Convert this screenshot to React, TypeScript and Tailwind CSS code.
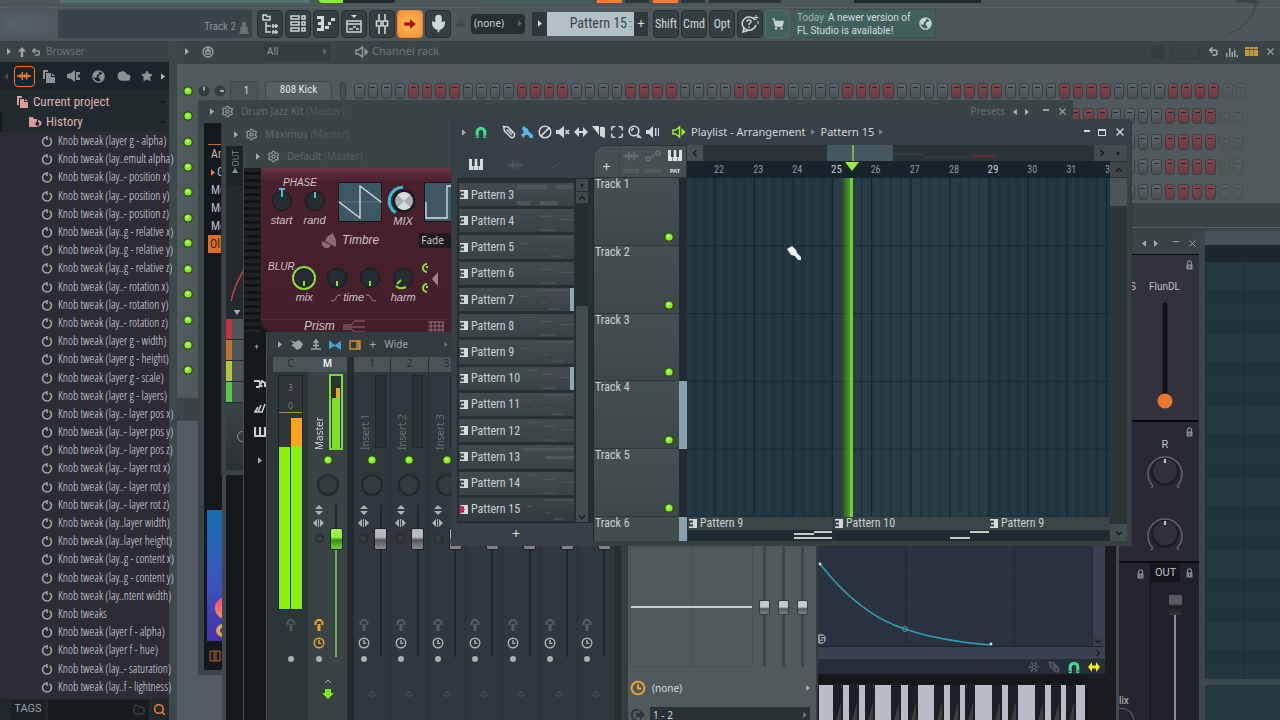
import React from 'react';
import clsx from 'clsx';
import { twMerge } from 'tailwind-merge';
import {
  Ban, Cloud, Magnet, Maximize, Mic, Search,
  Settings, ShoppingCart, Star, Undo2, X, Folder, Snowflake
} from 'lucide-react';

const HISTORY = [
  'Knob tweak (layer g - alpha)', 'Knob tweak (lay..emult alpha)', 'Knob tweak (lay..- position x)',
  'Knob tweak (lay..- position y)', 'Knob tweak (lay..- position z)', 'Knob tweak (lay..g - relative x)',
  'Knob tweak (lay..g - relative y)', 'Knob tweak (lay..g - relative z)', 'Knob tweak (lay..- rotation x)',
  'Knob tweak (lay..- rotation y)', 'Knob tweak (lay..- rotation z)', 'Knob tweak (layer g - width)',
  'Knob tweak (layer g - height)', 'Knob tweak (layer g - scale)', 'Knob tweak (layer g - layers)',
  'Knob tweak (lay..- layer pos x)', 'Knob tweak (lay..- layer pos y)', 'Knob tweak (lay..- layer pos z)',
  'Knob tweak (lay..- layer rot x)', 'Knob tweak (lay..- layer rot y)', 'Knob tweak (lay..- layer rot z)',
  'Knob tweak (lay..layer width)', 'Knob tweak (lay..layer height)', 'Knob tweak (lay..g - content x)',
  'Knob tweak (lay..g - content y)', 'Knob tweak (lay..ntent width)', 'Knob tweaks',
  'Knob tweak (layer f - alpha)', 'Knob tweak (layer f - hue)', 'Knob tweak (lay..- saturation)',
  'Knob tweak (lay..f - lightness)',
];

const PATTERNS = [3, 4, 5, 6, 7, 8, 9, 10, 11, 12, 13, 14, 15];
const TRACKS = [1, 2, 3, 4, 5];
const INSERTS = ['1', '2', '3', '', '', '', ''];
const BLACK_KEYS = [833, 849, 865, 891, 908, 934, 950, 965, 992, 1008, 1035, 1051, 1066];
const BARS = Array.from({ length: 11 }, (_, i) => 28 + i * 39.15);

// ---------- shared bits ----------

const Tri = ({ left = false, className = '' }: { left?: boolean; className?: string }) => (
  <svg viewBox="0 0 5 8" className={twMerge('h-[7px] w-[4px] shrink-0 fill-[#a4afb1]', className)}>
    <path d={left ? 'M5 0V8L0 4z' : 'M0 0V8L5 4z'} />
  </svg>
);

const Led = () => (
  <svg viewBox="0 0 10 10" className="size-[10px] shrink-0">
    <circle cx="5" cy="5" r="4.8" fill="#2b4a1d" />
    <circle cx="5" cy="5" r="3.6" fill="#86ec24" />
    <circle cx="4.5" cy="4.2" r="1.4" fill="#c9ff7d" />
  </svg>
);

const Chevron = ({ d }: { d: string }) => (
  <svg viewBox="0 0 10 10" className="size-[10px] fill-none stroke-[#171e21]" strokeWidth="1.4"><path d={d} /></svg>
);

const UP = 'M2 6.5L5 3.5L8 6.5';
const DOWN = 'M2 3.5L5 6.5L8 3.5';
const LEFT = 'M6.5 2L3.5 5L6.5 8';
const RIGHT = 'M3.5 2L6.5 5L3.5 8';

const PianoIcon = ({ className = '' }: { className?: string }) => (
  <svg viewBox="0 0 14 11" className={twMerge('h-[11px] w-[14px]', className)}>
    <path fill="currentColor" d="M0 0H3V7H4V0H4.200V7H5.400V0H8.600V7H9.800V0H11V0H14V11H0z" />
    <path fill="#373f47" d="M3 0H5.500V7H3zM8.500 0H11V7H8.500zM4 7H4.500V11H4zM9.500 7H10V11H9.500z" />
  </svg>
);

const WaveIcon = ({ className = '' }: { className?: string }) => (
  <svg viewBox="0 0 16 12" className={twMerge('h-[12px] w-[16px]', className)}>
    <path fill="none" stroke="currentColor" strokeWidth="1.6" d="M0 6H16M3.5 4V8M6 1.5V10.5M8.5 4V8M11 2V10M13 4.5V7.5" />
  </svg>
);

const LinkIcon = () => (
  <svg viewBox="0 0 16 12" className="h-[12px] w-[16px] fill-none stroke-current" strokeWidth="1.3">
    <circle cx="3" cy="9" r="2" /><circle cx="13" cy="3" r="2" /><path d="M5 8L7 7L9 5L11 4" />
  </svg>
);

const SpeakerBox = ({ className = '' }: { className?: string }) => (
  <svg viewBox="0 0 14 12" className={clsx('h-[12px] w-[14px]', className)}>
    <path d="M1 4H3.5L7.5 1V11L3.5 8H1z" fill="none" stroke="currentColor" strokeWidth="1.5" />
    <path d="M9.5 2L13.5 6L9.5 10z" fill="currentColor" />
  </svg>
);

const PencilIcon = ({ className = '' }: { className?: string }) => (
  <svg viewBox="0 0 14 14" className={twMerge('size-[14px] fill-none stroke-current', className)} strokeWidth="1.500">
    <path d="M1.500 1.500L6 2L12.500 8.500Q13 11 11 12.500Q10 13 9 12.500L2.500 6zM4.500 4.500L10 10M6.500 3.500L11 8" />
  </svg>
);

const GlobeIcon = ({ className = '' }: { className?: string }) => (
  <svg viewBox="0 0 14 14" className={clsx('size-[13px] shrink-0 fill-none stroke-current', className)}>
    <circle cx="7" cy="7" r="6" strokeWidth="1.500" />
    <path className="fill-current stroke-none" d="M1.500 5L4 2L7 1.500L8 3.500L6.500 5L5 5.500L5.500 7L4 8.500L2 7.500zM9 5L11.500 4L13 7L11.500 10.500L9.500 12L8.500 9.500L7 8.500L7.500 6z" />
  </svg>
);

const ClipIcon = ({ rec = false }: { rec?: boolean }) => (
  <svg viewBox="0 0 8 9" className="h-[9px] w-[8px] shrink-0">
    <path fill="#d3dbdc" d="M0 0H8V9H0V7.5H4V5.2H1V3.8H4V1.5H0z" />
    {rec && <path fill="#e8174c" d="M0 0L5 4.5L0 9z" />}
  </svg>
);

const MagnetIcon = ({ className = '' }: { className?: string }) => (
  <svg viewBox="0 0 12 12" className={clsx('size-[12px]', className)}>
    <path d="M2.2 12V6A3.8 3.8 0 0 1 9.8 6V12" fill="none" stroke="currentColor" strokeWidth="3" />
    <path d="M1.8 9.5V11M10.2 9.5V11" stroke="#25383a" strokeWidth="1.2" />
  </svg>
);

const ClockIcon = ({ className = '' }: { className?: string }) => (
  <svg viewBox="0 0 12 12" className={clsx('shrink-0 fill-none stroke-current', className)} strokeWidth="1.4">
    <circle cx="6" cy="6" r="4.8" /><path d="M6 3V6.4H8.4" />
  </svg>
);

const PlugIcon = () => (
  <svg viewBox="0 0 10 14" className="h-[14px] w-[10px] shrink-0 fill-none stroke-current" strokeWidth="2">
    <path d="M1.5 7V4.5L3.5 2H6.5L8.5 4.5V7" /><path d="M5 6V13" strokeWidth="3" />
  </svg>
);

const Gear = () => <Settings size={13} strokeWidth={2.5} className="shrink-0 text-[#8a9698]" />;

const PluginTitle = ({ name, owner }: { name: string; owner: string }) => (
  <div className="flex h-[23px] shrink-0 items-center gap-[7px] pl-[12px] text-[10px] text-[#5d686a]">
    <Tri />
    <Gear />
    <span>{name} <span className="text-[#505b5d]">{owner}</span></span>
  </div>
);

const DarkKnob = ({ label, children }: { label?: string; children?: React.ReactNode }) => (
  <div className="flex w-[33px] flex-col items-center">
    <svg viewBox="0 0 26 26" className="size-[26px] overflow-visible">
      <circle cx="13" cy="13" r="9.5" fill="#252c32" stroke="#1b2126" strokeWidth="1.5" />
      {children}
    </svg>
    {label && <span>{label}</span>}
  </div>
);

// ---------- top toolbar ----------

const ToolButton = ({ label, active = false, children }: { label: string; active?: boolean; children: React.ReactNode }) => (
  <button
    aria-label={label}
    className={clsx(
      'flex h-[28px] w-[26px] shrink-0 items-center justify-center rounded-sm border font-[Roboto_Condensed,Roboto,sans-serif] text-[12px]',
      active ? 'border-[#e08030] bg-[radial-gradient(#ffc05c,#ff8a34)] text-[#b01500]' : 'border-[#262f32] bg-[#353e41] text-[#cfd8d9]'
    )}
  >
    {children}
  </button>
);

const TopBar = () => (
  <header className="flex h-[41px] shrink-0 flex-col overflow-hidden bg-[#4d575a]">
    <div className="flex h-[8px] shrink-0 items-start border-b border-[#586265]">
      <div className="ml-[60px] h-[3px] w-[250px] bg-[#55736d]" />
      <div className="ml-[9px] h-[3px] w-[24px] rounded-bl bg-[#8cf028]" />
      <div className="h-[3px] w-[52px] rounded-br bg-[#1e2829]" />
      <div className="ml-[85px] h-[3px] w-[112px] bg-[#456058]" />
      <div className="ml-[5px] h-[3px] w-[25px] bg-[#ff7a2c]" />
      <div className="ml-[3px] h-[3px] w-[24px] bg-[#2d3639]" />
      <div className="ml-[4px] h-[3px] w-[25px] bg-[#ff7a2c]" />
      <div className="ml-[3px] h-[3px] w-[24px] bg-[#2d3639]" />
      <div className="ml-[4px] h-[3px] w-[72px] bg-[#2d3639]" />
      <div className="ml-[73px] h-[3px] w-[127px] bg-[#20282b]" />
      <svg viewBox="0 0 40 36" className="mr-[18px] ml-auto h-[36px] w-[40px] shrink-0 fill-none stroke-[#3c4649]">
        <path d="M14 1Q24 -1 37 3" strokeWidth="4" /><path d="M34 4Q28 28 4 35" strokeWidth="1" />
      </svg>
    </div>
    <div className="flex items-center gap-[2px] pt-px">
      <div className="h-[28px] w-[56px] bg-[radial-gradient(ellipse_at_20%_50%,#56626d,#4d575a)] blur-[3px]" />
      <div className="mr-[3px] flex h-[28px] w-[194px] items-end justify-end gap-[3px] bg-[#3a4347] pr-[3px] pb-[1px] font-[Roboto_Condensed,Roboto,sans-serif] text-[11px] text-[#8a9496]">
        <span className="pb-px">Track 2</span>
        <svg viewBox="0 0 10 14" className="mb-[2px] h-[13px] w-[10px] fill-[#697476]"><path d="M3 0H7V5H9V10H10V13H0V10H1V5H3z" /></svg>
      </div>
      <ToolButton label="Browser">
        <svg viewBox="0 0 18 20" className="h-[20px] w-[18px] fill-none stroke-current" strokeWidth="1.5">
          <path d="M2 6V1H5L6 2.500H9V6zM5 8V18H10M5 12H10M12 10V14M12 12H17M15 10V14M12 16V20M12 18H17M15 16V20" />
        </svg>
      </ToolButton>
      <ToolButton label="Channel rack">
        <svg viewBox="0 0 16 18" className="h-[18px] w-[16px] fill-none stroke-current" strokeWidth="1.5">
          <path d="M1 1H9V4H1zM1 7H9V10H1zM1 13H9V16H1zM12 1H15V4H12zM12 7H15V10H12zM12 13H15V16H12z" />
        </svg>
      </ToolButton>
      <ToolButton label="Piano roll">
        <svg viewBox="0 0 18 16" className="h-[16px] w-[18px] fill-current">
          <path d="M0 0H7V15H0V12H4V9H1V6H4V3H0zM8 10H12V13H8zM11 6H14V9H11zM14 2H18V5H14z" />
        </svg>
      </ToolButton>
      <ToolButton label="Playlist">
        <svg viewBox="0 0 18 20" className="h-[20px] w-[18px] fill-none stroke-current" strokeWidth="1.5">
          <path d="M6 1H12L9 4z" className="fill-current stroke-none" />
          <path d="M2 7H16V18H2zM2 10H16M4 15H8M8 13H11M11 15H14" />
        </svg>
      </ToolButton>
      <ToolButton label="Mixer">
        <svg viewBox="0 0 14 20" className="h-[20px] w-[14px] fill-none stroke-current" strokeWidth="1.6">
          <path d="M4 0V6M4 13V20M10 0V6M10 13V20M1.500 7H6V12H1.500zM8 7H12.500V12H8z" />
        </svg>
      </ToolButton>
      <ToolButton label="Follow" active>
        <svg viewBox="0 0 14 12" className="h-[10px] w-[12px] fill-current"><path d="M0 4H7V0L14 6L7 12V8H0z" /></svg>
      </ToolButton>
      <ToolButton label="Record"><Mic size={19} strokeWidth={2.2} className="fill-[#cfd8d9]" /></ToolButton>
      <Magnet size={10} className="mx-[3px] shrink-0 -rotate-45 text-[#3c4548]" />
      <button className="flex h-[20px] w-[54px] shrink-0 items-center justify-between rounded-sm bg-[#262e31] px-[3px] text-[10px] text-[#ccd4d5]">
        (none)<Tri className="fill-[#58646a]" />
      </button>
      <div className="ml-[5px] flex h-[24px] shrink-0">
        <button aria-label="Pattern menu" className="flex w-[15px] items-center justify-center bg-[#30393c]"><Tri className="fill-[#d3dbdc]" /></button>
        <div className="flex w-[87px] items-center justify-end gap-[2px] bg-[#b2c1c6] pr-[2px] font-[Roboto_Condensed,Roboto,sans-serif] text-[14px] text-[#39454b]">
          <span className="whitespace-nowrap">Pattern 15</span>
          <svg viewBox="0 0 3 8" className="h-[8px] w-[3px] fill-[#7d8c92]"><path d="M0 1H3V2H0zM0 6H3V7H0z" /></svg>
        </div>
        <button className="w-[14px] bg-[#30393c] text-[14px] leading-[24px] text-[#d3dbdc]">+</button>
      </div>
      <div className="ml-[3px] flex gap-[2px]">
        <ToolButton label="Shift">Shift</ToolButton>
        <ToolButton label="Cmd">Cmd</ToolButton>
        <ToolButton label="Opt">Opt</ToolButton>
        <ToolButton label="Help">
          <svg viewBox="0 0 20 20" className="size-[20px] fill-none stroke-current" strokeWidth="1.5">
            <path d="M15 6A7 6.500 0 1 0 16 11M4 14L3 18L8 16.500" /><path d="M7 8Q7 6 9 6Q11.500 6 11 8Q9 9.500 9 11M9 12.500V14" />
            <path d="M16 1V6M13.500 3.500H18.500M18 7V10" strokeWidth="1" />
          </svg>
        </ToolButton>
        <button aria-label="Shop" className="flex h-[28px] w-[25px] items-center justify-center rounded-sm border border-[#4d6f69] bg-[#41615c] text-[#c6d4d2]">
          <ShoppingCart size={12} strokeWidth={3} className="fill-[#c6d4d2]" />
        </button>
      </div>
      <div className="ml-[2px] flex h-[29px] w-[142px] shrink-0 items-center justify-between border border-[#3d504e] bg-[#41605b] pr-[3px] pl-[2px] text-[10px] leading-[13px] text-[#cedddb]">
        <p className="font-[Roboto,sans-serif] whitespace-nowrap"><span className="mr-[4px] text-[#9fb2af]">Today</span>A newer version of<br />FL Studio is available!</p>
        <GlobeIcon className="text-[#c6d4d2]" />
      </div>
    </div>
  </header>
);

// ---------- browser ----------

const Browser = () => (
  <aside className="flex w-[177px] shrink-0 flex-col border-r-[8px] border-[#3d484a] bg-[#2c2c34]">
    <div className="flex h-[21px] shrink-0 items-center gap-[5px] bg-[#3a4446] pl-[7px] text-[10px] text-[#69757a]">
      <Tri className="mr-[2px]" />
      <svg viewBox="0 0 8 10" className="h-[10px] w-[8px] fill-[#9aa5a8]"><path d="M4 0L8 4.500H5.200V10H2.800V4.500H0z" /></svg>
      <Undo2 size={10} strokeWidth={3.500} className="text-[#8c979a]" />
      Browser
    </div>
    <nav className="flex h-[28px] shrink-0 items-center justify-between bg-[#1c2329] pr-[4px] pl-[4px] text-[#8b9296]">
      <Tri left className="fill-[#454e52]" />
      <button aria-label="Project" className="flex size-[21px] items-center justify-center rounded-[4px] border border-[#e07f34] text-[#f08030]">
        <WaveIcon className="w-[14px]" />
      </button>
      <svg viewBox="0 0 12 13" className="mx-[3px] h-[13px] w-[12px] fill-current"><path d="M0 0H5V2H2V9H0z" /><path d="M3 3H8V7H12V13H3zM9 3L12 6H9z" /></svg>
      <svg viewBox="0 0 14 12" className="mx-[3px] h-[12px] w-[14px] fill-current"><path d="M0 4L4 3L8 0V12L4 9L0 8zM9 2H13V4.500H11V7.500H13V10H9z" /></svg>
      <GlobeIcon className="mx-[3px]" />
      <Cloud size={14} className="mx-[3px] fill-current" />
      <Star size={12} className="mx-[2px] fill-current" />
      <Tri className="fill-[#b3babd]" />
    </nav>
    <div className="flex h-[42px] shrink-0 flex-col bg-[#222a2e] pt-[2px] font-[Roboto_Condensed,Roboto,sans-serif] text-[13px] text-[#dcb5b2]">
      <div className="flex h-[20px] items-center gap-[5px] pr-[4px] pl-[17px]">
        <svg viewBox="0 0 11 12" className="h-[12px] w-[11px] fill-[#d99c96]"><path d="M0 0H5V2H2V9H0zM3 3H7V6H11V12H3zM8 3L11 5H8z" /></svg>
        <span>Current project</span>
        <span className="ml-auto h-[2px] w-[4px] bg-[#11171a]" />
      </div>
      <div className="flex h-[20px] items-center gap-[4px] border-l-2 border-[#141a1d] pr-[4px] pl-[27px]">
        <svg viewBox="0 0 13 12" className="h-[12px] w-[13px] fill-[#d99c96]"><path d="M0 1H4L5 3H8V5L6 8L9 11H0zM9 4Q14 5 12 9L9 11L10 8Q11 7 9 6z" /></svg>
        <span>History</span>
        <span className="ml-auto h-[2px] w-[4px] bg-[#11171a]" />
      </div>
    </div>
    <ul className="flex min-h-0 flex-1 flex-col pl-[41px] font-[Open_Sans_Condensed_Light,Roboto_Condensed,sans-serif] text-[12px] text-[#dcdde3]">
      {HISTORY.map(name => (
        <li key={name} className="flex min-h-0 flex-1 items-center gap-[5px]">
          <svg viewBox="0 0 12 12" className="size-[12px] shrink-0 fill-none stroke-[#a3a4ad]" strokeWidth="1.500">
            <path d="M3.500 2.800A4.500 4.500 0 1 0 8.500 2.800M6 1V5M3 2.500H6" />
          </svg>
          <span className="whitespace-nowrap">{name}</span>
        </li>
      ))}
    </ul>
    <div className="mt-[3px] flex h-[21px] shrink-0 items-center bg-[#20282c] text-[11px]">
      <button className="ml-[11px] h-[20px] w-[34px] bg-[#1a2024] font-[Roboto,sans-serif] text-[#9aa3a8]">TAGS</button>
      <label className="ml-[3px] flex h-[20px] w-[101px] items-center bg-[#151b1f] pr-[4px]">
        <input aria-label="Search" className="w-full min-w-0 bg-transparent outline-none" />
        <Folder size={12} className="shrink-0 text-[#454e52]" />
      </label>
      <Search size={13} strokeWidth={3} className="ml-[4px] text-[#e07a34]" />
    </div>
  </aside>
);

// ---------- channel rack ----------

const StepButton = ({ index }: { index: number }) => (
  <button
    aria-label={`Step ${index + 1}`}
    className={clsx(
      'mr-[3px] flex h-[16px] min-w-0 flex-1 justify-center rounded-[3px] border border-[#394144] pt-[3px]',
      index > 63 ? 'opacity-30' : '',
      Math.floor(index / 4) % 2 === 1 ? 'bg-[linear-gradient(#84474d,#6a3a41)]' : 'bg-[linear-gradient(#60676b,#484e52)]'
    )}
  >
    <span className="h-px w-[5px] bg-[#22282b]" />
  </button>
);

const ChannelRack = () => (
  <section className="absolute top-0 left-0 flex w-full flex-col">
    <div className="flex h-[23px] items-center bg-[#3a4446] pr-[4px] pb-[2px] pl-[8px] text-[12px] text-[#69757a]">
      <Tri />
      <svg viewBox="0 0 12 12" className="ml-[13px] size-[12px] fill-none stroke-[#97a2a5]" strokeWidth="1.400">
        <circle cx="6" cy="6" r="5" /><circle cx="6" cy="6" r="2.200" /><path d="M6 6V1" />
      </svg>
      <button className="ml-[50px] flex h-[18px] w-[66px] items-center justify-between bg-[#333c3f] px-[3px] text-[10px] text-[#8b9699]">
        All<Tri className="fill-[#5c676a]" />
      </button>
      <SpeakerBox className="mr-[3px] ml-[25px] text-[#8b9699]" />
      <span className="text-[11px]">Channel rack</span>
      <div className="ml-auto flex items-center gap-[7px] text-[#9ba6a9]">
        <span className="size-[14px] rounded-full bg-[#333c3f]" />
        <span className="mr-[1px] h-[14px] w-[28px] border border-[#333c3f]" />
        <Undo2 size={11} strokeWidth={3.500} />
        <svg viewBox="0 0 12 10" className="h-[10px] w-[12px] fill-current"><path d="M0 6H1.500V10H0zM3 1H4.500V10H3zM5.500 5H7V10H5.500zM8 3H9.500V10H8zM10.500 8H12V10H10.500z" /></svg>
        <svg viewBox="0 0 13 9" className="h-[9px] w-[13px] fill-[#c29a3c]"><path d="M0 0H4V9H0zM4.500 0H8.500V9H4.500zM9 0H13V9H9z" /><path d="M0 2.500H13" stroke="#3a4446" strokeWidth=".8" /></svg>
        <X size={11} strokeWidth={2.500} />
      </div>
    </div>
    <div className="flex h-[334px] flex-col bg-[#505a5c] pt-[14px]">
      <div className="flex h-[305px] flex-col">
        {Array.from({ length: 12 }, (_, row) => (
          <div key={row} className="flex flex-1 items-center pl-[6px]">
            <Led />
            {row === 0 && (
              <>
                <svg viewBox="0 0 28 12" className="ml-[5px] h-[12px] w-[28px]">
                  <circle cx="6" cy="6" r="5.500" fill="#343c3f" /><circle cx="22" cy="6" r="5.500" fill="#343c3f" />
                  <path d="M6 1.500V5.500M22 6H26" stroke="#c5cdce" strokeWidth="1.500" />
                </svg>
                <span className="ml-[4px] flex h-[20px] w-[28px] items-center justify-center border border-[#3e484a] bg-[#4a5456] pl-[5px] text-[11px] text-[#cdd5d6]">1</span>
                <button className="ml-[7px] h-[20px] w-[67px] rounded-sm border border-[#3e484a] bg-[#566063] font-[Roboto_Condensed,Roboto,sans-serif] text-[11px] text-[#e0e6e6]">808 Kick</button>
                <span className="ml-[8px] h-[18px] w-[6px] rounded-sm border border-[#353e40] bg-[#465053]" />
              </>
            )}
            <div className={clsx('flex w-[895px]', row === 0 ? 'ml-[8px]' : 'ml-[158px]', row > 4 && 'invisible')}>
              {Array.from({ length: 66 }, (_, i) => <StepButton key={i} index={i} />)}
            </div>
          </div>
        ))}
      </div>
    </div>
    <div className="h-[23px] bg-[#3a4446]" />
  </section>
);

const PianoRoll = () => (
  <section className="absolute top-[162px] right-0 bottom-0 flex w-[190px] flex-col bg-[#3a4447]">
    <div className="h-[25px] border-b border-[#536265]" />
    <div className="h-[3px]" />
    <div className="ml-[115px] h-[14px] bg-[#435359]" />
    <div className="ml-[115px] h-[17px] bg-[#1a272d]" />
    <div className="ml-[115px] h-[417px] border-l border-[#1e3038] bg-[repeating-linear-gradient(#25383f_0px,#25383f_28px,#20323a_28px,#20323a_43px,#25383f_43px,#25383f_57px,#20323a_57px,#20323a_72px)]">
      <div className="ml-[37px] h-full border-l border-[#1b2c34]" />
    </div>
    <div className="ml-[115px] h-[6px] bg-[#3a4a4c]" />
    <div className="ml-[115px] flex-1 bg-[#25383f]" />
  </section>
);

// ---------- plugin windows ----------

const DrumKit = () => (
  <section className="absolute top-[59px] left-[21px] flex h-[575px] w-[875px] flex-col bg-[#3a4447]">
    <div className="flex items-center justify-between pr-[5px]">
      <PluginTitle name="Drum Jazz Kit" owner="(Master)" />
      <div className="flex items-center gap-[8px] text-[10px] text-[#626d70]">
        Presets
        <Tri left className="h-[10px]" /><Tri className="h-[10px]" />
        <span className="ml-[6px] mb-[3px] h-[2px] w-[6px] bg-[#97a2a4]" />
        <X size={11} strokeWidth={2.500} className="text-[#97a2a4]" />
      </div>
    </div>
    <div className="mb-[5px] ml-[6px] flex w-[860px] flex-1 flex-col bg-[#14171c] font-[Roboto_Condensed,Roboto,sans-serif] text-[12px] text-[#b9bfc2]">
      <div className="mx-[4px] h-[22px] border-b border-[#c8702a]" />
      {['An', 'G', 'Me', 'Mo', 'Mo'].map((t, i) => (
        <div key={i} className="flex h-[18px] items-center gap-[2px] pl-[7px]">
          {t === 'G' && <Tri className="fill-[#f08030]" />}{t}
        </div>
      ))}
      <div className="mx-[4px] flex h-[18px] items-center bg-[#dc7026] pl-[2px] text-[#3a1e10]">Oll</div>
      <div className="mt-[257px] ml-[3px] flex h-[131px] w-[60px] flex-col justify-end gap-[5px] bg-[linear-gradient(#146fae,#3a55bd_55%,#4530b0)] pb-[4px]">
        <span className="ml-[8px] size-[22px] rounded-full bg-[linear-gradient(#ff3f8e,#f59a4c)]" />
        <span className="ml-[9px] size-[13px] rounded-full border-[4px] border-[#e0a04c]" />
      </div>
      <svg viewBox="0 0 12 12" className="mt-[9px] ml-[5px] size-[12px] fill-none stroke-[#b9692e]"><path d="M1 1H11V11H1zM5 1V11M7 1V11" /></svg>
    </div>
  </section>
);

const Maximus = () => (
  <section className="absolute top-[82px] left-[44px] flex h-[352px] w-[300px] flex-col border-l border-[#2e3739] bg-[#3a4447]">
    <PluginTitle name="Maximus" owner="(Master)" />
    <div className="mb-[5px] ml-[4px] flex w-[18px] flex-1 flex-col bg-[#222a2e]">
      <div className="flex h-[40px] flex-col items-center gap-[1px] bg-[#1c2427] pt-[4px] text-[8px] leading-[9px] text-[#79858a]">
        <span className="[writing-mode:vertical-rl] rotate-180">OUT</span>
        <svg viewBox="0 0 6 5" className="h-[5px] w-[6px] fill-[#8b9699]"><path d="M3 0L6 5H0z" /></svg>
      </div>
      <svg viewBox="0 0 18 40" className="mt-[80px] h-[40px] w-[18px] fill-none"><path d="M5 35Q9 18 18 4" stroke="#c83a46" strokeWidth="1.500" /></svg>
      <svg viewBox="0 0 8 6" className="my-[4px] ml-[7px] h-[5px] w-[8px] fill-[#a4afb1]"><path d="M0 0H8L4 6z" /></svg>
      {['bg-[#c03540]', 'bg-[#c07434]', 'bg-[#b4c63c]', 'bg-[#56c848]'].map(c => (
        <div key={c} className="mb-px flex h-[20px] shrink-0 bg-[#4d5759]"><span className={clsx('w-[6px]', c)} /></div>
      ))}
      <div className="flex flex-1 items-center justify-end overflow-hidden bg-[linear-gradient(#3a4446,#283134)]">
        <span className="-mr-[4px] size-[11px] shrink-0 rounded-full border border-[#8a9598]" />
      </div>
    </div>
  </section>
);

const Harmor = () => (
  <section className="absolute top-[104px] bottom-0 left-[66px] flex w-[300px] flex-col border-x border-[#3f4a4c] bg-[#15181d]">
    <div className="bg-[#3a4447]"><PluginTitle name="Default" owner="(Master)" /></div>
    <div className="flex">
      <div className="w-[17px] shrink-0 bg-[repeating-linear-gradient(#1d2025_0px,#1d2025_4px,#101216_4px,#101216_7px)]" />
      <div className="flex h-[164px] flex-1 flex-col overflow-hidden rounded-bl-[12px] bg-[linear-gradient(#6b3444,#48202e_8%,#451e2b)] pt-[8px] font-[Liberation_Sans,sans-serif] text-[11px] leading-[13px] text-[#d0c2c6] italic">
        <div className="flex h-[52px] shrink-0 pl-[4px]">
          <div>
            <p className="pl-[18px] text-[10px]">PHASE</p>
            <div className="-mt-[1px] flex">
              <DarkKnob label="start"><path d="M10 1H16M13 1V9" stroke="#3fc3d2" strokeWidth="2" /></DarkKnob>
              <DarkKnob label="rand"><path d="M13 4V10" stroke="#3fc3d2" strokeWidth="2" /></DarkKnob>
            </div>
          </div>
          <svg viewBox="0 0 44 40" className="mt-[6px] ml-[7px] h-[40px] w-[44px]">
            <rect width="44" height="40" fill="#3d5862" stroke="#15191c" strokeWidth="2" />
            <path d="M0 20H44" stroke="#648089" strokeWidth=".8" />
            <path d="M1 20L22 36V4L43 20" fill="none" stroke="#d7e2e4" strokeWidth="1.300" />
          </svg>
          <div className="ml-[3px] flex flex-col items-center pt-[8px] text-[11px]">
            <svg viewBox="0 0 34 32" className="h-[34px] w-[36px]">
              <path d="M17 3A13 13 0 0 0 10 27" fill="none" stroke="#35bdd0" strokeWidth="3" />
              <circle cx="18" cy="16" r="11" fill="#1b1f23" /><circle cx="18" cy="16" r="8.500" fill="#a9aeb0" />
              <path d="M18 16L12 10Q18 5 24 10zM18 16L12 22Q18 27 24 22z" fill="#d8dbdc" />
            </svg>
            <span className="-mt-[3px]">MIX</span>
          </div>
          <svg viewBox="0 0 44 40" className="mt-[6px] ml-[3px] h-[40px] w-[44px]">
            <rect width="44" height="40" fill="#3d5862" stroke="#15191c" strokeWidth="2" />
            <path d="M2 20V36H23V4H44" fill="none" stroke="#d7e2e4" strokeWidth="1.300" />
          </svg>
        </div>
        <div className="flex h-[24px] shrink-0 items-center gap-[5px] pl-[60px] text-[12px]">
          <svg viewBox="0 0 16 18" className="h-[18px] w-[16px] fill-[#8a6a74]"><path d="M11 0L12 3Q16 8 15 16L4 10Q6 4 11 3zM1 10L10 14Q8 18 4 17Q0 15 1 10z" /></svg>
          Timbre
          <span className="ml-[35px] flex h-[15px] w-[40px] items-center bg-[#1d1a20] pl-[2px] font-[Noto_Sans,sans-serif] text-[10px] not-italic">Fade</span>
        </div>
        <div className="flex h-[67px] shrink-0 pt-[8px] pl-[7px]">
          <span className="text-[10px]">BLUR</span>
          <div className="-ml-[7px] flex pt-[5px]">
            <DarkKnob label="mix"><circle cx="13" cy="13" r="11" fill="none" stroke="#8be02a" strokeWidth="2" /><path d="M13 16V21" stroke="#8be02a" strokeWidth="2" /></DarkKnob>
            <div className="flex flex-col items-center">
              <div className="flex">
                <DarkKnob><path d="M13 16V21" stroke="#8be02a" strokeWidth="2" /></DarkKnob>
                <DarkKnob><path d="M13 16V21" stroke="#8be02a" strokeWidth="2" /></DarkKnob>
              </div>
              <span className="flex items-center gap-[2px]">
                <svg viewBox="0 0 10 8" className="h-[8px] w-[10px] fill-none stroke-[#a08a92]"><path d="M0 7Q5 7 5 4Q5 1 10 1" /></svg>
                time
                <svg viewBox="0 0 10 8" className="h-[8px] w-[10px] fill-none stroke-[#a08a92]"><path d="M0 1Q5 1 5 4Q5 7 10 7" /></svg>
              </span>
            </div>
            <DarkKnob label="harm"><path d="M11 15L7 19M6 21Q10 25 16 22" fill="none" stroke="#8be02a" strokeWidth="2" /></DarkKnob>
            <svg viewBox="0 0 30 40" className="-mt-[6px] h-[40px] w-[30px] fill-none stroke-[#8be02a]" strokeWidth="2">
              <path d="M7 5A4 4 0 1 0 7 13M7 25A4 4 0 1 0 7 33M6 8H8M6 28H8" /><path d="M12 20L18 13V27z" fill="#a0808a" stroke="none" />
            </svg>
          </div>
        </div>
        <div className="flex shrink-0 items-center gap-[8px] border-t border-dotted border-[#5d3542] pl-[43px] text-[12px] leading-[12px]">
          Prism
          <svg viewBox="0 0 22 12" className="h-[12px] w-[22px] fill-none stroke-[#94707c]"><path d="M0 5H8L12 1H22M0 7H22M0 9H8L12 12H22" /></svg>
          <svg viewBox="0 0 18 12" className="ml-[54px] h-[12px] w-[18px] fill-none stroke-[#94707c]"><path d="M1 2H17M1 6H17M1 10H17M4 1V12M8 1V12M12 1V12M16 1V12" /></svg>
        </div>
      </div>
    </div>
    <div className="flex flex-col gap-[14px] pt-[9px] pl-[10px] text-[#c9cfd1]">
      <span className="text-[9px] leading-[12px]">+</span>
      <svg viewBox="0 0 12 10" className="mt-[12px] h-[10px] w-[12px] fill-none stroke-current" strokeWidth="2"><path d="M0 2H5L8 8M2 8H5L8 2L11 4V8" /></svg>
      <svg viewBox="0 0 12 10" className="h-[10px] w-[12px] fill-none stroke-current" strokeWidth="1.600"><path d="M1 9L4 4M4 9L7 2M8 9L11 1M0 9H9" /></svg>
      <svg viewBox="0 0 12 10" className="h-[10px] w-[12px] fill-none stroke-current" strokeWidth="2.200"><path d="M1 0V10M6 0V10M11 0V10M1 9H12" /></svg>
      <Tri className="mt-[6px] ml-[4px]" />
    </div>
  </section>
);

// ---------- mixer ----------

const Fader = ({ master = false }: { master?: boolean }) => (
  <div className="flex h-[152px] w-[14px] flex-col items-center">
    <span className="h-[23px] w-[2px] bg-[#1f272a]" />
    <span
      className={clsx(
        'h-[22px] w-[13px] rounded-[2px] border border-[#1b2225]',
        master ? 'bg-[linear-gradient(#9cf04a_40%,#3d8a18_55%,#6fd32c)]' : 'bg-[linear-gradient(#b9b9c0_40%,#55565c_55%,#8b8b92)]'
      )}
    />
    <span className={clsx('w-[2px] flex-1', master ? 'bg-[#6cae46]' : 'bg-[#1f272a]')} />
  </div>
);

const Strip = ({ label, name, master = false }: { label: string; name: string; master?: boolean }) => (
  <div className={clsx('flex flex-col items-center border-r border-[#283033]', master ? 'w-[40px] shrink-0 bg-[#394244]' : 'min-w-0 flex-1 bg-[#30383d]')}>
    <div className={clsx('h-[15px] w-full bg-[#4a5456] text-center text-[10px] leading-[13px]', master ? 'font-bold text-[#e6ecec]' : 'text-[#242c2f]')}>{label}</div>
    <div className="mt-[2px] flex h-[76px] w-full items-end justify-center gap-[3px]">
      <span className={clsx('h-[76px] w-[14px] rotate-180 text-[10px] leading-[14px] whitespace-nowrap [writing-mode:vertical-rl]', master ? 'text-[#cdd5d6]' : 'text-[#687376]')}>{name}</span>
      {master ? (
        <div className="flex h-[76px] w-[14px] items-end border-2 border-[#79dd26] bg-[#2a3234] px-px">
          <span className="h-[50px] flex-1 bg-[#7ce020]" />
          <span className="h-[60px] flex-1 border-t-[10px] border-[#eda127] bg-[#7ce020]" />
        </div>
      ) : (
        <div className="mb-[2px] h-[73px] w-[11px] border border-[#20282b] bg-[#2a3236]" />
      )}
    </div>
    <div className="mt-[5px]"><Led /></div>
    <span className="mt-[9px] size-[22px] shrink-0 rounded-full border-2 border-[#22292d] bg-[#333b3f]" />
    <div className="mt-[9px] flex w-full justify-center gap-[3px] text-[#a9b2b4]">
      <div className="flex w-[14px] flex-col items-center">
        <svg viewBox="0 0 12 26" className="h-[26px] w-[12px] shrink-0 fill-current">
          <path d="M2 4L6 0L10 4zM2 6H10L6 10zM0 18L4 14V22zM5 14H6V22H5zM7 14L11 18L7 22z" />
        </svg>
        <span className="mt-[3px] size-[9px] shrink-0 rounded-full border border-[#1f2629] bg-[#353d41]" />
        <div className={clsx('mt-[75px] flex flex-col items-center gap-[5px]', master ? 'text-[#e6a428]' : 'text-[#555f63]')}>
          <PlugIcon />
          <ClockIcon className={clsx('size-[12px]', !master && 'text-[#a9b2b4]')} />
        </div>
        <span className="mt-[7px] size-[6px] shrink-0 rounded-full bg-current" />
      </div>
      <Fader master={master} />
    </div>
    {master ? (
      <svg viewBox="0 0 12 22" className="mt-[17px] h-[22px] w-[12px]"><path d="M3 4L6 1L9 4" fill="none" stroke="#a9b2b4" /><path d="M3 10H9V14H12L6 20L0 14H3z" fill="#82e820" /></svg>
    ) : (
      <svg viewBox="0 0 10 7" className="mt-[28px] h-[7px] w-[10px] fill-none stroke-[#4c565a]"><path d="M1 6L5 1L9 6M3 6H7" /></svg>
    )}
  </div>
);

const Mixer = () => (
  <section className="absolute top-[291px] bottom-0 left-[89px] flex w-[355px] flex-col overflow-hidden border-l border-[#414c4e] bg-[#2d3639]">
    <div className="flex h-[25px] shrink-0 items-center gap-[8px] bg-[#323c3e] pl-[11px] text-[10px] text-[#9aa5a8]">
      <Tri className="h-[7px]" />
      <svg viewBox="0 0 13 11" className="h-[11px] w-[13px] fill-current"><path d="M0 1L5 3L9 1L13 5L11 9L7 11L4 8L1 6L4 5z" /></svg>
      <svg viewBox="0 0 10 11" className="h-[11px] w-[10px] fill-none stroke-current" strokeWidth="1.600"><path d="M5 9V2M2.500 4L5 1L7.500 4M0 10H10M2 6.500H8" /></svg>
      <svg viewBox="0 0 12 10" className="h-[10px] w-[12px] fill-[#4aa0c8]"><path d="M0 0L6 5L12 1V10L6 6L0 9z" /></svg>
      <svg viewBox="0 0 12 10" className="h-[10px] w-[12px] fill-none stroke-[#c59032]" strokeWidth="1.400"><path d="M1 1H11V9H1zM8 1V9M10 1V9" /></svg>
      <span className="text-[13px]">+</span>
      Wide
      <Tri className="ml-[28px] h-[5px] fill-[#697476]" />
    </div>
    <div className="flex flex-1 pl-[6px]">
      <div className="flex w-[35px] shrink-0 flex-col items-center">
        <div className="h-[15px] w-full bg-[#4a5456] text-center text-[10px] leading-[13px] text-[#242c2f]">C</div>
        <div className="mt-[3px] flex h-[235px] w-[25px] flex-col border border-[#1d2427] bg-[#2e3438]">
          <div className="flex h-[37px] shrink-0 flex-col items-center gap-[5px] border-b border-[#b08c3c] pt-[5px] text-[8px] leading-[13px] text-[#778286]"><span>3</span><span>0</span></div>
          <div className="flex flex-1 items-end gap-px">
            <span className="h-[162px] flex-1 bg-[#8bf00c]" />
            <span className="h-[191px] flex-1 border-t-[28px] border-[#fba41c] bg-[#8bf00c]" />
          </div>
        </div>
        <div className="mt-[8px] text-[#4f595d]"><PlugIcon /></div>
        <span className="mt-[24px] size-[6px] rounded-full bg-[#a9b2b4]" />
      </div>
      <Strip label="M" name="Master" master />
      <span className="w-[6px] shrink-0 bg-[#232b2e]" />
      {INSERTS.map((n, i) => <Strip key={i} label={n} name={n && `Insert ${n}`} />)}
      <span className="w-[6px] shrink-0 bg-[#252e30]" />
    </div>
  </section>
);

const MixerRack = () => (
  <section className="absolute top-[480px] bottom-0 left-[444px] flex w-[198px] flex-col border-r-[3px] border-l-[7px] border-[#323d3f] bg-[#505a5c] pt-[26px]">
    <div className="flex h-[120px] shrink-0 gap-[4px] pl-[2px]">
      <div className="flex w-[123px] flex-col justify-center border border-[#485254] bg-[linear-gradient(90deg,transparent_49%,#485254_50%,transparent_51%)]">
        <span className="h-[2px] bg-[#c6cecf]" />
      </div>
      {[0, 1, 2].map(i => (
        <div key={i} className="flex w-[15px] flex-col items-center">
          <span className="w-[3px] flex-1 bg-[#3d4749]" />
          <span className="h-[15px] w-[11px] rounded-[2px] border border-[#353d3f] bg-[linear-gradient(#c5cbcc_45%,#50585a_60%,#7d8587)]" />
          <span className="w-[3px] flex-1 bg-[#3d4749]" />
        </div>
      ))}
    </div>
    <div className="mt-[11px] flex h-[20px] shrink-0 items-center pr-[6px] pl-[2px] text-[10px] text-[#d0d8d9]">
      <ClockIcon className="mr-[6px] size-[16px] text-[#eca92c]" />
      (none)
      <Tri className="ml-auto h-[6px]" />
    </div>
    <div className="mt-[7px] flex h-[20px] shrink-0 items-center gap-[5px] pl-[3px]">
      <svg viewBox="0 0 14 12" className="h-[12px] w-[14px] fill-[#2d3639]"><path d="M5 0H8V2H4Q2 2 2 6Q2 10 5 10V12Q0 12 0 6Q0 0 5 0zM5 4H9V1L14 6L9 11V8H5z" /></svg>
      <button className="flex h-[17px] w-[160px] items-center justify-between bg-[#293134] px-[3px] text-[10px] leading-[14px] text-[#d0d8d9]">1 - 2<Tri className="h-[6px] fill-[#6a767a]" /></button>
    </div>
  </section>
);

const Envelope = () => (
  <section className="absolute top-[500px] bottom-0 left-[641px] flex w-[301px] flex-col border-r-[3px] border-[#3e4a4c] bg-[#1b1c22] pt-[5px]">
    <div className="flex h-[100px] w-[287px] shrink-0">
      <svg viewBox="818 546 274 100" className="h-[100px] w-[274px]">
        <rect x="818" y="546" width="274" height="100" fill="#2b3340" />
        {Array.from({ length: 26 }, (_, i) => <path key={i} d={`M${820 + i * 10.8} 546V646`} stroke={i % 10 === 8 ? '#232b37' : '#293140'} />)}
        {Array.from({ length: 9 }, (_, i) => <path key={i} d={`M818 ${556 + i * 10.8}H1092`} stroke="#283040" />)}
        <path d="M820 564Q860 615 905 629Q940 641 991 645" fill="none" stroke="#2f9ead" strokeWidth="1.500" />
        <circle cx="905" cy="629" r="2.500" fill="none" stroke="#2f9ead" />
        <circle cx="820" cy="564" r="1.400" fill="#cfe4e6" /><circle cx="991" cy="644" r="1.400" fill="#cfe4e6" />
        <circle cx="821" cy="639" r="5" fill="#8d959c" />
        <path d="M824 636.500H820.500V639H823.500V641.500H820" fill="none" stroke="#2b3340" strokeWidth="1.200" />
      </svg>
      <div className="flex w-[13px] flex-col justify-end border-l border-[#232a36] bg-[#394150]"><Chevron d={DOWN} /></div>
    </div>
    <div className="flex h-[13px] w-[287px] shrink-0 items-center justify-end border-t border-[#1d232e] bg-[#3a4251] pr-[2px]"><Chevron d={RIGHT} /></div>
    <div className="flex h-[15px] w-[287px] shrink-0 items-center justify-end gap-[8px] bg-[#262d3b] pt-px pr-[5px] text-[#5a616c]">
      <Snowflake size={12} /><PencilIcon className="size-[12px]" />
      <MagnetIcon className="text-[#3fe08c]" />
      <svg viewBox="0 0 12 10" className="h-[10px] w-[12px] fill-[#f6ee18]"><path d="M0 5L4 0V3.500H8V0L12 5L8 10V6.500H4V10z" /></svg>
    </div>
    <svg viewBox="818 674 270 50" className="h-[50px] w-[270px] shrink-0">
      <rect x="818" y="674" width="270" height="50" fill="#16171b" />
      <rect x="819" y="685" width="266" height="40" fill="#b9bcc6" />
      {BLACK_KEYS.map(x => (
        <g key={x}><rect x={x} y="685" width="10" height="40" fill="#1c1f23" /><path d={`M${x + 2} 725L${x + 8} 702V725z`} fill="#3a3f40" /></g>
      ))}
    </svg>
  </section>
);

const RoundKnob = () => (
  <svg viewBox="0 0 38 38" className="size-[38px] shrink-0">
    <path d="M7 33A17 17 0 1 1 31 33M7 33L5 35M31 33L33 35" fill="none" stroke="#62636e" strokeWidth="1.500" />
    <circle cx="19" cy="19" r="14" fill="#1c1c25" /><circle cx="19" cy="18" r="12" fill="#30303d" />
    <path d="M19 6V10" stroke="#c3c5cb" strokeWidth="2" />
  </svg>
);

const SmallLock = ({ className = '' }: { className?: string }) => (
  <svg viewBox="0 0 7 10" className={clsx('h-[10px] w-[7px] shrink-0', className)}>
    <path d="M1.500 5V3Q1.500 .8 3.500 .8Q5.500 .8 5.500 3V5" fill="none" stroke="#85878f" strokeWidth="1.200" />
    <path d="M.5 4.500H6.500V9.500H.5z" fill="#85878f" />
    <path d="M3.500 6V8" stroke="#32323c" />
  </svg>
);

const Limiter = () => (
  <section className="absolute top-[191px] bottom-0 left-[941px] flex w-[87px] flex-col border-r-[6px] border-[#3a4649] bg-[#25262f] font-[Roboto,sans-serif] text-[11px] text-[#bfc1c7]">
    <div className="flex h-[22px] shrink-0 items-center justify-end gap-[8px] bg-[#3a4447] pt-px pr-[1px]">
      <Tri left /><Tri />
      <span className="ml-[7px] mb-[4px] h-px w-[6px] bg-[#97a2a4]" />
      <X size={11} strokeWidth={2} className="text-[#97a2a4]" />
    </div>
    <div className="flex h-[168px] shrink-0 flex-col items-center border-t border-b-2 border-[#08090c] bg-[#32323c] pt-[5px] pl-[12px]">
      <SmallLock className="mr-[6px] self-end" />
      <div className="mt-[9px] grid w-full grid-cols-[3px_1fr_3px] text-center text-[10px] leading-[16px]">
        <span>S</span><span>FlunDL</span>
      </div>
      <svg viewBox="0 0 20 112" className="mt-[3px] h-[112px] w-[20px] shrink-0">
        <path d="M10 7V100" stroke="#111217" strokeWidth="5" strokeLinecap="round" /><circle cx="10" cy="103" r="7.500" fill="#e8762e" />
      </svg>
    </div>
    <div className="flex h-[141px] shrink-0 flex-col items-center border-b-2 border-[#08090c] bg-[#292935] pt-[5px] pl-[13px]">
      <SmallLock className="mr-[6px] self-end" />
      <span className="leading-[16px]">R</span>
      <RoundKnob />
      <span className="h-[24px] shrink-0" />
      <RoundKnob />
    </div>
    <div className="flex flex-1">
      <div className="flex w-[33px] flex-col border-r border-[#111217] bg-[#23242e] pt-[6px]">
        <SmallLock className="mr-[6px] self-end" />
        <span className="mt-auto pl-px text-[10px] leading-[14px]">lix</span>
        <span className="-ml-[12px] h-[12px] w-[28px] rounded-t-full border border-b-0 border-[#62636e]" />
      </div>
      <div className="flex flex-1 flex-col items-center bg-[#1f2029]">
        <div className="flex h-[20px] w-full items-center justify-between pr-[6px]"><span className="bg-[#15161c] px-[4px] leading-[18px]">OUT</span><SmallLock /></div>
        <span className="mt-[12px] h-[20px] w-[13px] shrink-0 bg-[linear-gradient(#5a5a60_45%,#1a1a1f_55%,#34343a)]" />
        <span className="w-[2px] flex-1 bg-[#8c8d92]" />
      </div>
    </div>
  </section>
);

// ---------- playlist ----------

const PlaylistTools = () => (
  <>
    <PencilIcon />
    <svg viewBox="0 0 14 14" className="size-[14px] fill-[#55b8ec]"><path d="M3 1L8 4L9 7L13 10V13L10 13L8 10H5L4 13L1 10L4 7L2 4z" /></svg>
    <Ban size={14} strokeWidth={2.500} className="rotate-90" />
    <svg viewBox="0 0 14 12" className="h-[12px] w-[14px] fill-current"><path d="M0 4H3L8 0V12L3 8H0z" /><path d="M9.500 4L13 8M13 4L9.500 8" stroke="currentColor" strokeWidth="1.500" /></svg>
    <svg viewBox="0 0 14 10" className="h-[10px] w-[14px] fill-current"><path d="M0 5L5 0V4H9V0L14 5L9 10V6H5V10z" /></svg>
    <svg viewBox="0 0 14 12" className="h-[12px] w-[14px] fill-current"><path d="M0 0H7V9zM8 1H12Q13 1 13 3V12L8 10z" /></svg>
    <Maximize size={14} strokeWidth={2.800} />
    <svg viewBox="0 0 14 14" className="size-[14px] fill-none stroke-current" strokeWidth="1.600"><circle cx="6" cy="6" r="4.800" /><path d="M9.500 9.500L13 13M9 12H12M6 3.500Q4 3.500 3.500 6" /></svg>
    <svg viewBox="0 0 14 12" className="h-[12px] w-[14px] fill-current"><path d="M0 4H3L7 0V12L3 8H0zM9 2H10.500V10H9zM12 2H13V10H12z" /></svg>
  </>
);

const PatternPicker = () => (
  <div className="flex w-[141px] shrink-0 flex-col pl-[5px]">
    <div className="flex h-[33px] shrink-0 items-center pt-[6px] pl-[12px] text-[#4a545c]">
      <PianoIcon className="mr-[24px] text-[#d6dddd]" />
      <WaveIcon className="mr-[26px]" />
      <svg viewBox="0 0 14 12" className="h-[12px] w-[14px] stroke-current"><path d="M1 10L12 3" /></svg>
    </div>
    <div className="flex h-[345px] shrink-0 border-y border-[#20282b] bg-[#272f33]">
      <ul className="flex w-[117px] flex-col pt-[2px]">
        {PATTERNS.map((n, i) => (
          <li key={n} className="flex min-h-0 flex-1 flex-col pt-[2px] pb-px pl-[2px]">
            <div className={clsx(
              'flex h-full items-center gap-[3px] pl-[1px] font-[Roboto_Condensed,Roboto,sans-serif] text-[12px] text-[#c9d1d2]',
              (n === 7 || n === 10) && 'border-r-[4px] border-[#8fa9b0]',
              n === 15 ? 'bg-[linear-gradient(#3b4447,#323a3d)]' : 'bg-[linear-gradient(#424b4e,#394245)]'
            )}>
              <ClipIcon rec={n === 15} />
              <span className="whitespace-nowrap">Pattern {n}</span>
              <svg viewBox="0 0 50 22" preserveAspectRatio="none" className="ml-auto h-full min-w-0 flex-1 stroke-[#4d575a]">
                {n === 3 && <path d="M0 4H26M34 4H50M0 19H12M20 19H36" strokeWidth="4" />}
                {n === 13 && <path d="M0 4H50M22 12H50" strokeWidth="3" />}
                {n !== 3 && n !== 13 && <path d={i % 2 ? 'M4 3H16M20 7H32M38 10H50M20 20H34' : 'M20 2H50M4 8H10M22 14H28M30 20H40'} />}
              </svg>
            </div>
          </li>
        ))}
      </ul>
      <div className="mr-[5px] ml-auto flex w-[12px] flex-col items-center bg-[#252d30]">
        <span className="flex h-[12px] w-full items-center justify-center bg-[#414b4d]"><Tri className="h-[5px] w-[3px] fill-[#1b2225]" /></span>
        <span className="mt-px flex h-[11px] w-full items-center justify-center bg-[#414b4d]"><Chevron d={UP} /></span>
        <span className="mt-auto flex h-[216px] w-full items-end justify-center bg-[#434d4f]"><Chevron d={DOWN} /></span>
      </div>
    </div>
    <button className="h-[20px] w-[118px] text-center text-[15px] leading-[20px] text-[#d0d8d9]">+</button>
  </div>
);

const TrackHeaders = () => (
  <div className="flex w-[94px] shrink-0 flex-col">
    <div className="flex h-[33px] shrink-0 rounded-tl-[12px] border border-[#2a3336] bg-[#465053] text-[#677275]">
      <button className="w-[26px] border-r border-[#3a4346] pt-[10px] text-[14px] leading-[20px] text-[#dbe2e2]">+</button>
      <div className="grid flex-1 grid-cols-3 place-items-center pt-[1px] text-[6px] leading-[8px]">
        <WaveIcon /><LinkIcon /><PianoIcon className="text-[#dbe2e2]" />
        <span>NOTE</span><span>CHAN</span><span className="font-bold text-[#dbe2e2]">PAT</span>
      </div>
    </div>
    <div className="flex flex-1 overflow-hidden border-l border-[#20282b]">
      <div className="flex w-[85px] flex-col font-[Roboto_Condensed,Roboto,sans-serif] text-[12px] text-[#c9d1d2]">
        <div className="flex h-[339px] shrink-0 flex-col">
          {TRACKS.map(n => (
            <div key={n} className="flex flex-1 flex-col justify-between rounded-r-[3px] border-b border-[#2e3739] bg-[linear-gradient(#454f51,#3e4749)] pr-[5px] pb-[3px] pl-[1px] leading-[13px]">
              Track {n}
              <span className="self-end"><Led /></span>
            </div>
          ))}
        </div>
        <div className="flex-1 bg-[#434d4f] pl-[1px] leading-[13px]">Track 6</div>
      </div>
      <div className="flex flex-1 flex-col bg-[#222b30]">
        <span className="mt-[203px] h-[68px] bg-[#87a2aa]" />
        <span className="mt-[68px] flex-1 bg-[#87a2aa]" />
      </div>
    </div>
    <div className="h-[5px] shrink-0 bg-[#36403f]" />
  </div>
);

const Clip = ({ n, className, children }: { n: number; className: string; children?: React.ReactNode }) => (
  <div className={clsx('flex flex-col overflow-hidden bg-[#1e2b30] font-[Roboto_Condensed,Roboto,sans-serif] text-[12px] leading-[13px] text-[#c9d1d2]', className)}>
    <div className="flex h-[13px] shrink-0 items-center gap-[3px] bg-[#3b4548] pl-[1px]"><ClipIcon />Pattern {n}</div>
    {children}
  </div>
);

const Arrangement = () => (
  <div className="relative flex min-w-0 flex-1 flex-col">
    <div className="flex h-[16px] shrink-0 bg-[#2a3437]">
      <span className="flex w-[16px] items-center justify-center bg-[#465053]"><Chevron d={LEFT} /></span>
      <span className="ml-[124px] flex w-[66px] justify-center bg-[#45585f]"><span className="-ml-[14px] w-[2px] bg-[#86ad3c]" /></span>
      <svg viewBox="0 0 200 16" className="h-[16px] min-w-0 flex-1"><path d="M0 9H30" stroke="#3f4a4d" /><path d="M30 12H75" stroke="#374346" /><path d="M78 11H102" stroke="#5a3037" strokeWidth="3" /></svg>
      <span className="flex w-[16px] items-center justify-center bg-[#424c4e]"><Chevron d={RIGHT} /></span>
    </div>
    <svg className="h-[17px] w-full shrink-0 bg-[#15232b] font-[Roboto_Condensed,Roboto,sans-serif] text-[10px]">
      {BARS.slice(0, 10).map((x, i) => (
        <text key={i} x={x + 4} y="12" textAnchor="middle" className={i === 3 || i === 7 ? 'fill-[#c5d0d3] text-[11px]' : 'fill-[#8d9a9f]'}>
          {22 + i}
        </text>
      ))}
      <text x="418" y="12" className="fill-[#8d9a9f]">3</text>
      <path d="M158 1H172L165 10z" fill="#9af02e" />
    </svg>
    <svg className="h-[339px] w-full shrink-0 bg-[#243741]">
      <rect x="146" width="156" height="339" fill="#2a3d46" />
      {BARS.map((x, i) => (
        <g key={i}>
          <path d={`M${x} 0V339`} stroke="#162730" strokeWidth="1.300" />
          {[10, 20, 29].map(d => <path key={d} d={`M${x - d} 0V339`} stroke="#1f313b" />)}
          {[5, 15, 25, 34].map(d => <path key={d} d={`M${x - d} 0V339`} stroke="#2b414c" strokeOpacity=".6" />)}
        </g>
      ))}
      {TRACKS.map(n => <path key={n} d={`M0 ${n * 67.8}H430`} stroke="#1a2b34" />)}
      <path transform="translate(100 68)" fill="#f2f5f5" d="M0 3L5 0L9 4L10 7L14 11V14H11L8 10L4 9z" />
    </svg>
    <div className="flex h-[24px] shrink-0">
      <Clip n={9} className="w-[146px] border-l border-[#2b363a]">
        <svg viewBox="0 0 144 11" className="h-[11px] w-[144px] stroke-[#c3cecb]" strokeWidth="2"><path d="M106 4H126M126 2H144M106 8H144" /></svg>
      </Clip>
      <Clip n={10} className="w-[156px] border-l border-[#2b363a]">
        <svg viewBox="0 0 156 11" className="h-[11px] w-[156px] stroke-[#c3cecb]" strokeWidth="2"><path d="M116 8H136M136 2H155" /></svg>
      </Clip>
      <Clip n={9} className="flex-1" />
    </div>
    <div className="h-[5px] shrink-0 bg-[#36403f]" />
    <div className="pointer-events-none absolute top-[33px] bottom-[29px] left-[154px] w-[12px] border-r-[3px] border-[#74d02c] bg-[linear-gradient(90deg,transparent,#4aa01c)]" />
  </div>
);

const Playlist = () => (
  <section className="absolute top-[78px] left-[274px] flex h-[427px] w-[681px] flex-col rounded-t-[4px] border-x border-[#313b3d] bg-[#373f47]">
    <div className="flex h-[26px] shrink-0 items-center pl-[10px] text-[11px] text-[#d0d8d9]">
      <Tri />
      <MagnetIcon className="mr-[15px] ml-[9px] text-[#3fe08c]" />
      <div className="flex items-center gap-[4px]"><PlaylistTools /></div>
      <SpeakerBox className="mr-[5px] ml-[12px] text-[#9af02e]" />
      <span>Playlist - Arrangement</span>
      <Tri className="mr-[6px] ml-[5px] h-[6px] w-[4px] fill-[#7a8588]" />
      <span>Pattern 15</span>
      <Tri className="mx-[5px] h-[6px] w-[4px] fill-[#7a8588]" />
      <div className="mr-[5px] ml-auto flex items-center gap-[8px]">
        <span className="mb-[3px] h-[2px] w-[6px] bg-current" />
        <span className="h-[7px] w-[8px] border border-t-2 border-current" />
        <X size={12} strokeWidth={3} />
      </div>
    </div>
    <div className="flex min-h-0 flex-1">
      <PatternPicker />
      <TrackHeaders />
      <Arrangement />
      <div className="mr-[4px] flex w-[17px] shrink-0 flex-col bg-[#2b3536]">
        <span className="flex h-[16px] items-center justify-center bg-[#424c4e]"><Tri className="h-[5px] w-[3px] fill-[#1b2225]" /></span>
        <span className="mt-px flex h-[15px] items-center justify-center bg-[#3c4648]"><Chevron d={UP} /></span>
        <span className="mt-px h-[28px] bg-[#4a5557]" />
        <span className="mt-auto flex h-[17px] items-center justify-center bg-[#434e50]"><Chevron d={DOWN} /></span>
        <span className="h-[5px] bg-[#36403f]" />
      </div>
    </div>
  </section>
);

export default function App() {
  return (
    <div className="flex h-screen flex-col overflow-hidden bg-[#535c64] font-[Noto_Sans,sans-serif]">
      <TopBar />
      <div className="flex min-h-0 flex-1">
        <Browser />
        <main className="relative min-w-0 flex-1 overflow-hidden">
          <ChannelRack />
          <PianoRoll />
          <DrumKit />
          <section className="absolute top-[430px] bottom-0 left-[45px] w-[24px] border-l-[4px] border-[#3d484a] bg-[#15181d]" />
          <Maximus />
          <Harmor />
          <Mixer />
          <MixerRack />
          <Limiter />
          <Envelope />
          <Playlist />
        </main>
      </div>
    </div>
  );
}
